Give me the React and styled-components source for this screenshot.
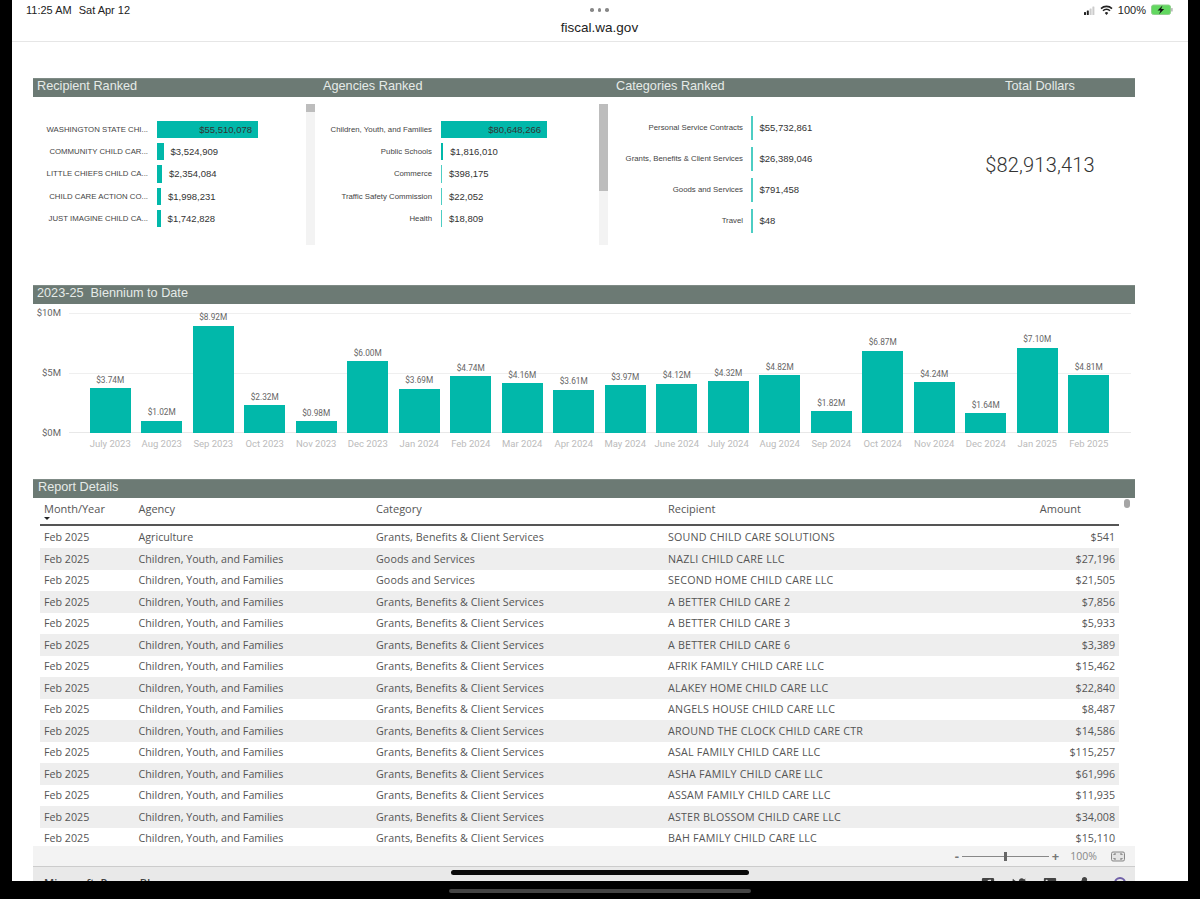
import React from "react";
import styled, { createGlobalStyle } from "styled-components";
import { FaFacebookSquare, FaTwitter, FaLinkedin, FaShareAlt } from "react-icons/fa";

const Global = createGlobalStyle`
  html, body { margin: 0; padding: 0; background: #000; }
  * { box-sizing: border-box; }
`;

const Frame = styled.div`
  width: 1200px; height: 899px; background: #000; display: flex; flex-direction: column;
  padding: 0 12px; overflow: hidden;
`;
const Screen = styled.div`
  height: 881px; flex: none; background: #fff; position: relative; overflow: hidden;
  display: flex; flex-direction: column;
`;
const Strip = styled.div`
  flex: 1; display: flex; align-items: flex-start; justify-content: center; padding-top: 8px;
`;
const GhostPill = styled.div`width: 302px; height: 4px; border-radius: 2px; background: #444;`;
const HomePill = styled.div`
  position: absolute; left: 439px; top: 870px; width: 298px; height: 5px; border-radius: 3px; background: #0a0a0a;
`;

const StatusBar = styled.header`
  height: 42px; flex: none; border-bottom: 1px solid #e6e6e6; position: relative;
  display: grid; grid-template-columns: 1fr 1fr 1fr; padding: 3px 15px 0 14px;
  font-family: "Liberation Sans", Arial, sans-serif; color: #222;
`;
const Clock = styled.div`font-size: 11px; line-height: 14px; display: flex; gap: 7px;`;
const Center = styled.div`display: flex; flex-direction: column; align-items: center;`;
const Dots = styled.div`
  display: flex; gap: 4px; height: 8px; align-items: center; margin-top: 3px;
`;
const Dot = styled.span`width: 3.5px; height: 3.5px; border-radius: 50%; background: #888;`;
const Url = styled.div`font-size: 13.5px; line-height: 16px; margin-top: 6px; color: #222;`;
const StatusRight = styled.div`
  display: flex; justify-content: flex-end; align-items: flex-start; gap: 5px; font-size: 11px; line-height: 14px;
`;

const Report = styled.main`
  flex: 1; min-height: 0; padding: 36px 53px 0 21px; display: flex; flex-direction: column;
  font-family: "Liberation Sans", Arial, sans-serif;
`;
const Band = styled.div`
  height: 19px; flex: none; background: #6c7a74; color: #e6ebe8; font-size: 12.7px; line-height: 16px;
  padding-left: ${p => p.$pad || 4}px; box-shadow: inset 0 1px 0 #7f8b86;
`;
const Grid = `display: grid; grid-template-columns: 286px 293px 336px 187px;`;
const TitleBand = styled(Band)`${Grid} padding-left: 0;`;
const BandTitle = styled.div`padding-left: 4px;`;
const BandTotal = styled.div`text-align: center; padding-right: 3px;`;

const Panels = styled.section`${Grid} height: 148px; flex: none; margin-bottom: 40px;`;
const Panel = styled.div`display: flex; min-width: 0;`;
const Rows = styled.div`flex: 1; min-width: 0; padding-top: ${p => p.$top}px;`;
const Row = styled.div`
  display: grid; grid-template-columns: ${p => p.$label}px 1fr; column-gap: ${p => p.$gap}px;
  height: ${p => p.$h}px; align-items: center;
`;
const RowLabel = styled.div`
  font-size: 7.8px; color: #444; text-align: right; white-space: nowrap;
`;
const BarCell = styled.div`display: flex; align-items: center; gap: ${p => p.$gap}px; height: 100%; padding: ${p => p.$pad}px 0;`;
const HBar = styled.div`
  height: 100%; background: #01b8aa; flex: none; opacity: ${p => p.$op || 1};
  display: flex; align-items: center; justify-content: flex-end;
`;
const InnerVal = styled.span`font-size: 9.5px; color: #333; white-space: nowrap; padding-right: 6px;`;
const Val = styled.span`font-size: 9.5px; color: #333; white-space: nowrap;`;
const Track = styled.div`
  width: 9px; flex: none; height: 141px; margin: 7px 4px 0 0; background: #f3f3f3;
`;
const Thumb = styled.div`width: 100%; height: ${p => p.$h}px; background: #bdbdbd;`;
const TotalCell = styled.div`
  display: flex; justify-content: center; padding: 56px 3px 0 0;
  font-family: Roboto, sans-serif; font-weight: 300; font-size: 20px; line-height: 24px; color: #333; letter-spacing: .2px;
`;

const Chart = styled.section`
  height: 175px; flex: none; display: grid; grid-template-columns: 36px 1062px; padding-top: 9px; 
  font-family: Roboto, sans-serif;
`;
const YAxis = styled.div`
  display: flex; flex-direction: column; justify-content: space-between; align-items: flex-end;
  font-size: 9.5px; color: #666; line-height: 10px; margin-top: -5px; height: 130px;
  padding-right: 8px; width: 36px;
`;
const Plot = styled.div`
  height: 120px; padding-left: 15.5px; display: flex; align-items: flex-end;
  background:
    linear-gradient(#efefef,#efefef) 0 0 / 100% 1px no-repeat,
    linear-gradient(#efefef,#efefef) 0 60px / 100% 1px no-repeat,
    linear-gradient(#e8e8e8,#e8e8e8) 0 119px / 100% 1px no-repeat;
`;
const Col = styled.div`width: 51.5px; flex: none; display: flex; flex-direction: column; align-items: center;`;
const ColVal = styled.div`font-size: 8.3px; color: #666; line-height: 10px; margin-bottom: 3.5px; white-space: nowrap;`;
const ColBar = styled.div`width: 40.6px; background: #01b8aa;`;
const ColMonth = styled.div`
  font-size: 9.5px; line-height: 12px; color: #bbb; white-space: nowrap; height: 0; transform: translateY(5px);
`;

const Table = styled.section`flex: none; height: 348px; padding: 0 16px 0 7px; position: relative; font-family: "Open Sans", sans-serif;`;
const TableBar = styled.div`
  position: absolute; left: 1091px; top: 1px; width: 6px; height: 9px; border-radius: 3px; background: #a5a5a5;
`;
const Cols = `display: grid; grid-template-columns: 94.5px 237.5px 292px 1fr 90px; padding-left: 4px;`;
const THead = styled.div`
  ${Cols} height: 28px; border-bottom: 2px solid #555; font-size: 11px; line-height: 14px; color: #555; padding-top: 4px;
`;
const THCell = styled.div`display: flex; flex-direction: column; align-items: flex-start;
  ${p => p.$right && "padding-right: 38px; align-items: flex-end;"}`;
const Caret = styled.div`
  width: 0; height: 0; border: 3.5px solid transparent; border-top: 3.5px solid #222; border-bottom: 0; margin-top: 1px;
`;
const TBody = styled.div`height: 320px; overflow: hidden; padding-top: .5px;`;
const TRow = styled.div`
  ${Cols} height: 21.5px; align-items: center; font-size: 10.7px; color: #555; white-space: nowrap;
  background: ${p => p.$alt ? "#eeeeee" : "#fff"};
`;
const CategoryCell = styled.div`letter-spacing: .09px;`;
const Recipient = styled.div`letter-spacing: .2px;`;
const Amount = styled.div`text-align: right; padding-right: 4px;`;

const ZoomBar = styled.div`
  flex: none; height: 21px; background: #f3f3f3; border-bottom: 1px solid #ccc;
  display: flex; justify-content: flex-end; align-items: center; padding-right: 10px;
  font-family: "Open Sans", sans-serif; color: #888; font-size: 10.5px;
`;
const ZoomSign = styled.span`font-size: 13px; font-weight: 700; color: #777; line-height: 14px;`;
const Slider = styled.div`
  width: 87px; height: 1px; background: #888; margin: 0 3px; position: relative;
`;
const SliderKnob = styled.div`position: absolute; left: 42px; top: -4px; width: 3px; height: 9px; background: #666;`;
const Pct = styled.span`margin: 0 14px 0 11px;`;
const LowerBar = styled.div`
  flex: none; height: 14px; background: #e9e9e9; display: flex; justify-content: space-between; padding: 10px 9px 0 11px;
  overflow: hidden; color: #444;
`;
const PowerBI = styled.div`
  font-family: "Open Sans", sans-serif; font-size: 11px; font-weight: 600; word-spacing: 3px; line-height: 14px;
  margin-top: -1px;
`;
const Social = styled.div`display: flex; align-items: flex-start; gap: 17px; font-size: 14px; line-height: 14px;`;
const Ring = styled.div`width: 12px; height: 12px; border-radius: 50%; border: 2px solid #6f5fa8; margin-left: 9px;`;

const Signal = () => (
  <svg width="12" height="12" viewBox="0 0 12 12" style={{ marginTop: 2 }}>
    <rect x="1" y="7" width="2" height="3" rx=".5" fill="#222" />
    <rect x="3.8" y="5.5" width="2" height="4.5" rx=".5" fill="#222" />
    <rect x="6.6" y="3.5" width="2" height="6.5" rx=".5" fill="#ccc" />
    <rect x="9.4" y="1.5" width="2" height="8.5" rx=".5" fill="#ccc" />
  </svg>
);
const Wifi = () => (
  <svg width="13" height="12" viewBox="0 0 13 12" style={{ marginTop: 1 }}>
    <path d="M1 4.6a8 8 0 0 1 11 0" fill="none" stroke="#222" strokeWidth="1.6" />
    <path d="M3 6.8a5 5 0 0 1 7 0" fill="none" stroke="#222" strokeWidth="1.6" />
    <path d="M6.5 11 4.8 8.9a2.5 2.5 0 0 1 3.4 0z" fill="#222" />
  </svg>
);
const Battery = () => (
  <svg width="22" height="12" viewBox="0 0 22 12" style={{ marginTop: 1 }}>
    <rect x=".5" y="1" width="19" height="9.5" rx="2" fill="#62d860" stroke="#8fd08c" />
    <rect x="20.2" y="4" width="1.4" height="3.5" rx=".6" fill="#aaa" />
    <path d="M11.5 1.5 6.5 6.6h3L8 10.2l5.2-5.2h-3z" fill="#111" />
  </svg>
);
const FitIcon = () => (
  <svg width="14" height="11" viewBox="0 0 14 11">
    <rect x=".5" y="1" width="13" height="9" rx="1.5" fill="#e4e4e4" stroke="#888" />
    <path d="M3 4V3h2M9 3h2v1M3 7v1h2M9 8h2V7" fill="none" stroke="#777" />
  </svg>
);

const recipients = [
  ["WASHINGTON STATE CHI...", "$55,510,078", 101],
  ["COMMUNITY CHILD CAR...", "$3,524,909", 6.5],
  ["LITTLE CHIEFS CHILD CA...", "$2,354,084", 5],
  ["CHILD CARE ACTION CO...", "$1,998,231", 4],
  ["JUST IMAGINE CHILD CA...", "$1,742,828", 3.6],
];
const agencies = [
  ["Children, Youth, and Families", "$80,648,266", 106],
  ["Public Schools", "$1,816,010", 2.2],
  ["Commerce", "$398,175", 1],
  ["Traffic Safety Commission", "$22,052", 1],
  ["Health", "$18,809", 1],
];
const categories = [
  ["Personal Service Contracts", "$55,732,861"],
  ["Grants, Benefits & Client Services", "$26,389,046"],
  ["Goods and Services", "$791,458"],
  ["Travel", "$48"],
];
const months = [
  ["July 2023", 3.74], ["Aug 2023", 1.02], ["Sep 2023", 8.92], ["Oct 2023", 2.32], ["Nov 2023", 0.98],
  ["Dec 2023", 6.0], ["Jan 2024", 3.69], ["Feb 2024", 4.74], ["Mar 2024", 4.16], ["Apr 2024", 3.61],
  ["May 2024", 3.97], ["June 2024", 4.12], ["July 2024", 4.32], ["Aug 2024", 4.82], ["Sep 2024", 1.82],
  ["Oct 2024", 6.87], ["Nov 2024", 4.24], ["Dec 2024", 1.64], ["Jan 2025", 7.1], ["Feb 2025", 4.81],
];
const CYF = "Children, Youth, and Families";
const GB = "Grants, Benefits & Client Services";
const details = [
  ["Agriculture", GB, "SOUND CHILD CARE SOLUTIONS", "$541"],
  [CYF, "Goods and Services", "NAZLI CHILD CARE LLC", "$27,196"],
  [CYF, "Goods and Services", "SECOND HOME CHILD CARE LLC", "$21,505"],
  [CYF, GB, "A BETTER CHILD CARE 2", "$7,856"],
  [CYF, GB, "A BETTER CHILD CARE 3", "$5,933"],
  [CYF, GB, "A BETTER CHILD CARE 6", "$3,389"],
  [CYF, GB, "AFRIK FAMILY CHILD CARE LLC", "$15,462"],
  [CYF, GB, "ALAKEY HOME CHILD CARE LLC", "$22,840"],
  [CYF, GB, "ANGELS HOUSE CHILD CARE LLC", "$8,487"],
  [CYF, GB, "AROUND THE CLOCK CHILD CARE CTR", "$14,586"],
  [CYF, GB, "ASAL FAMILY CHILD CARE LLC", "$115,257"],
  [CYF, GB, "ASHA FAMILY CHILD CARE LLC", "$61,996"],
  [CYF, GB, "ASSAM FAMILY CHILD CARE LLC", "$11,935"],
  [CYF, GB, "ASTER BLOSSOM CHILD CARE LLC", "$34,008"],
  [CYF, GB, "BAH FAMILY CHILD CARE LLC", "$15,110"],
];

const RankRow = ({ label, value, w, labelW, gap, h, pad }) => (
  <Row $label={labelW} $gap={gap} $h={h}>
    <RowLabel>{label}</RowLabel>
    <BarCell $gap={w > 20 ? 0 : 7} $pad={pad}>
      <HBar style={{ width: w }} $op={w < 2 ? 0.7 : 1}>{w > 20 && <InnerVal>{value}</InnerVal>}</HBar>
      {w <= 20 && <Val>{value}</Val>}
    </BarCell>
  </Row>
);

export default function App() {
  return (
    <>
      <Global />
      <Frame>
        <Screen>
          <StatusBar>
            <Clock><span>11:25 AM</span><span>Sat Apr 12</span></Clock>
            <Center>
              <Dots><Dot /><Dot /><Dot /></Dots>
              <Url>fiscal.wa.gov</Url>
            </Center>
            <StatusRight><Signal /><Wifi /><span>100%</span><Battery /></StatusRight>
          </StatusBar>
          <Report>
            <TitleBand>
              <BandTitle>Recipient Ranked</BandTitle>
              <BandTitle>Agencies Ranked</BandTitle>
              <BandTitle>Categories Ranked</BandTitle>
              <BandTotal>Total Dollars</BandTotal>
            </TitleBand>
            <Panels>
              <Panel>
                <Rows $top={21.5}>
                  {recipients.map(r => <RankRow key={r[0]} label={r[0]} value={r[1]} w={r[2]} labelW={115} gap={9} h={22.2} pad={2.5} />)}
                </Rows>
                <Track><Thumb $h={8} /></Track>
              </Panel>
              <Panel>
                <Rows $top={21.5}>
                  {agencies.map(r => <RankRow key={r[0]} label={r[0]} value={r[1]} w={r[2]} labelW={113} gap={9} h={22.2} pad={2.5} />)}
                </Rows>
                <Track><Thumb $h={87} /></Track>
              </Panel>
              <Panel>
                <Rows $top={15}>
                  {categories.map(r => <RankRow key={r[0]} label={r[0]} value={r[1]} w={1.5} labelW={131} gap={8} h={31} pad={3.5} />)}
                </Rows>
              </Panel>
              <TotalCell>$82,913,413</TotalCell>
            </Panels>
            <Band $pad={4}>2023-25&nbsp; Biennium to Date</Band>
            <Chart>
              <YAxis><span>$10M</span><span>$5M</span><span>$0M</span></YAxis>
              <Plot>
                {months.map(([m, v]) => (
                  <Col key={m}>
                    <ColVal>${v.toFixed(2)}M</ColVal>
                    <ColBar style={{ height: v * 12 }} />
                    <ColMonth>{m}</ColMonth>
                  </Col>
                ))}
              </Plot>
            </Chart>
            <Band $pad={5}>Report Details</Band>
            <Table>
              <TableBar />
              <THead>
                <THCell>Month/Year<Caret /></THCell>
                <THCell>Agency</THCell>
                <THCell>Category</THCell>
                <THCell>Recipient</THCell>
                <THCell $right>Amount</THCell>
              </THead>
              <TBody>
                {details.map((d, i) => (
                  <TRow key={d[2]} $alt={i % 2 === 1}>
                    <div>Feb 2025</div><div>{d[0]}</div><CategoryCell>{d[1]}</CategoryCell><Recipient>{d[2]}</Recipient><Amount>{d[3]}</Amount>
                  </TRow>
                ))}
              </TBody>
            </Table>
            <ZoomBar>
              <ZoomSign>-</ZoomSign>
              <Slider><SliderKnob /></Slider>
              <ZoomSign>+</ZoomSign>
              <Pct>100%</Pct>
              <FitIcon />
            </ZoomBar>
            <LowerBar>
              <PowerBI>Microsoft Power BI</PowerBI>
              <Social><FaFacebookSquare /><FaTwitter /><FaLinkedin /><FaShareAlt /><Ring /></Social>
            </LowerBar>
          </Report>
          <HomePill />
        </Screen>
        <Strip><GhostPill /></Strip>
      </Frame>
    </>
  );
}
